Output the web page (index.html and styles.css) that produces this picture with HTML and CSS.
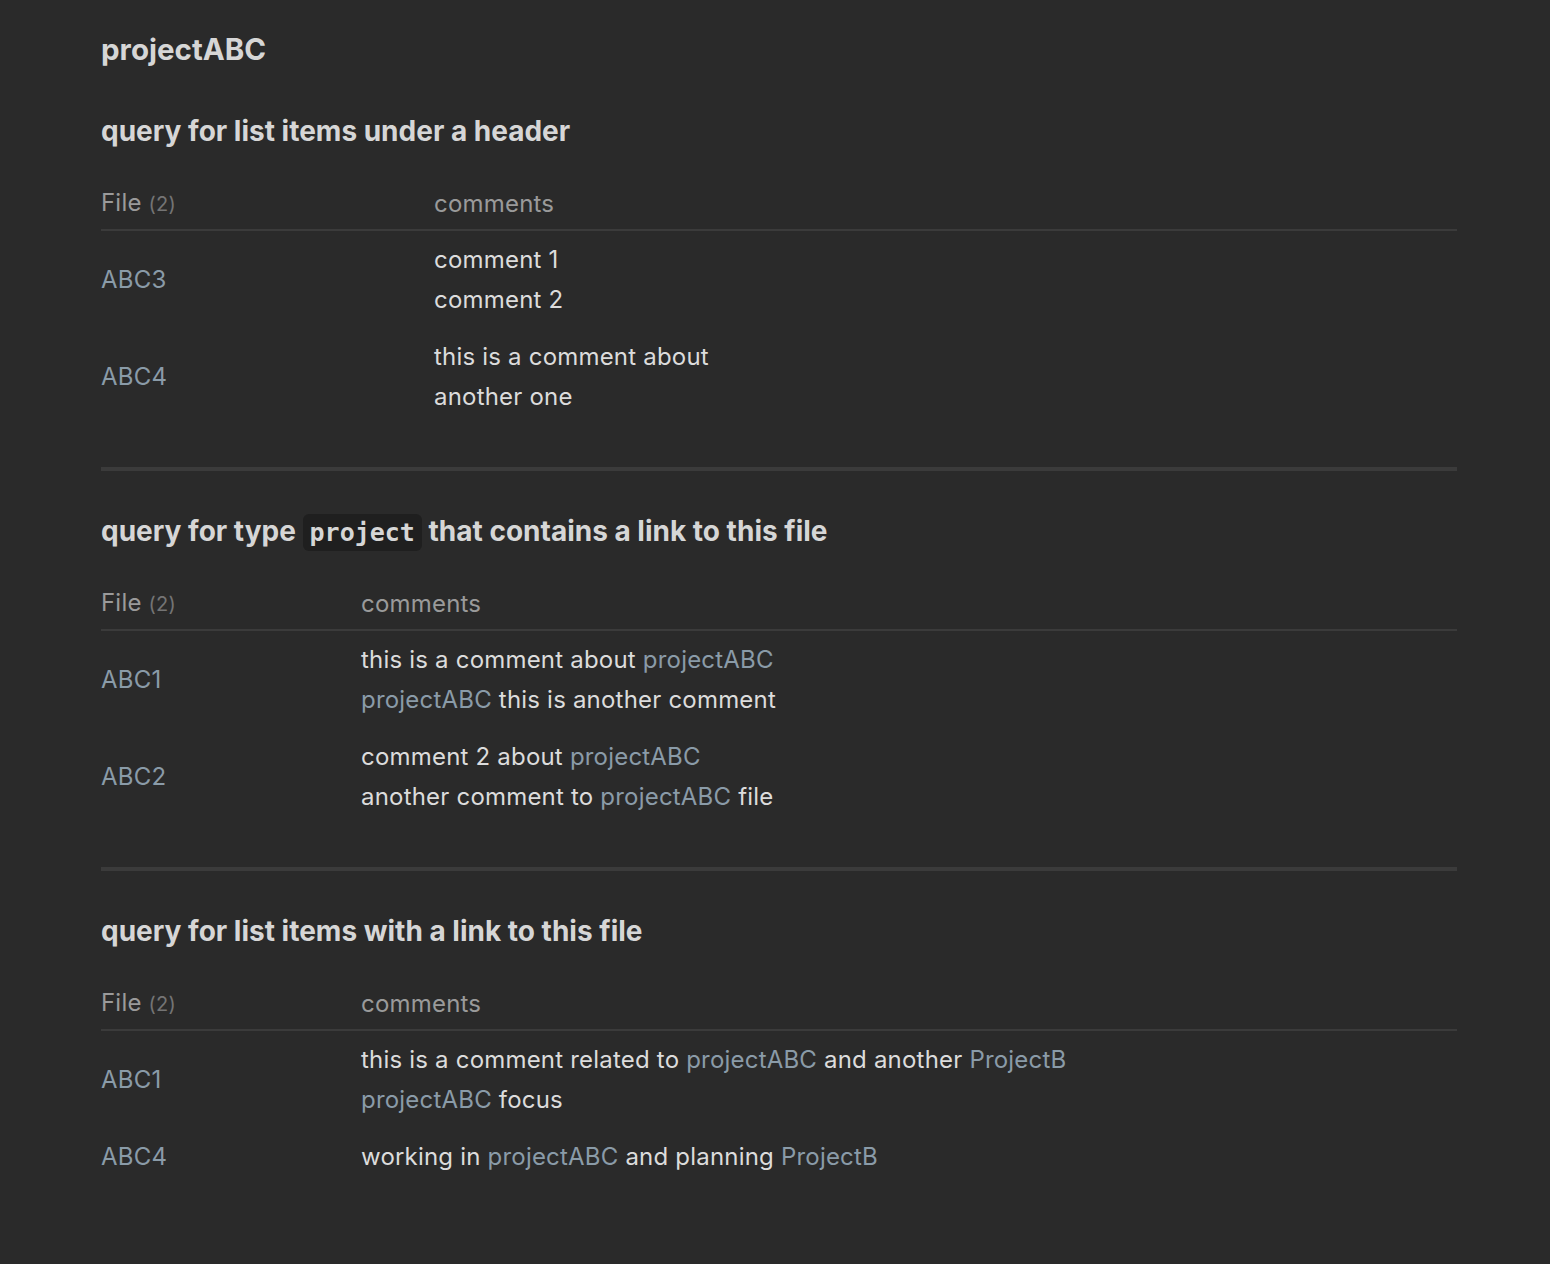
FILE: index.html
```html
<!DOCTYPE html>
<html lang="en">
<head>
<meta charset="utf-8">
<title>projectABC</title>
<link rel="stylesheet" href="styles.css">
</head>
<body>
<main class="page">
  <h1 class="title">projectABC</h1>

  <section class="query">
    <h2 class="query-title">query for list items under a header</h2>
    <table class="dv">
      <colgroup><col class="col-file col-file-wide"><col></colgroup>
      <thead>
        <tr><th>File <span class="count">(2)</span></th><th>comments</th></tr>
      </thead>
      <tbody>
        <tr>
          <td><a class="link">ABC3</a></td>
          <td><div class="line">comment 1</div><div class="line">comment 2</div></td>
        </tr>
        <tr>
          <td><a class="link">ABC4</a></td>
          <td><div class="line">this is a comment about</div><div class="line">another one</div></td>
        </tr>
      </tbody>
    </table>
  </section>

  <hr class="rule">

  <section class="query">
    <h2 class="query-title">query for type <code class="code">project</code> that contains a link to this file</h2>
    <table class="dv">
      <colgroup><col class="col-file"><col></colgroup>
      <thead>
        <tr><th>File <span class="count">(2)</span></th><th>comments</th></tr>
      </thead>
      <tbody>
        <tr>
          <td><a class="link">ABC1</a></td>
          <td><div class="line">this is a comment about <a class="link">projectABC</a></div><div class="line"><a class="link">projectABC</a> this is another comment</div></td>
        </tr>
        <tr>
          <td><a class="link">ABC2</a></td>
          <td><div class="line">comment 2 about <a class="link">projectABC</a></div><div class="line">another comment to <a class="link">projectABC</a> file</div></td>
        </tr>
      </tbody>
    </table>
  </section>

  <hr class="rule">

  <section class="query">
    <h2 class="query-title">query for list items with a link to this file</h2>
    <table class="dv">
      <colgroup><col class="col-file"><col></colgroup>
      <thead>
        <tr><th>File <span class="count">(2)</span></th><th>comments</th></tr>
      </thead>
      <tbody>
        <tr>
          <td><a class="link">ABC1</a></td>
          <td><div class="line">this is a comment related to <a class="link">projectABC</a> and another <a class="link">ProjectB</a></div><div class="line"><a class="link">projectABC</a> focus</div></td>
        </tr>
        <tr>
          <td><a class="link">ABC4</a></td>
          <td><div class="line">working in <a class="link">projectABC</a> and planning <a class="link">ProjectB</a></div></td>
        </tr>
      </tbody>
    </table>
  </section>
</main>
</body>
</html>
```

FILE: styles.css
```css
html, body {
  margin: 0;
  padding: 0;
  background: #2a2a2a;
}

body {
  font-family: Inter, "Noto Sans", "Liberation Sans", sans-serif;
  font-size: 24px;
  color: #dcdcdc;
  letter-spacing: 0.2px;
}

.page {
  width: 1356px;
  padding: 29px 0 60px 101px;
}

.title {
  margin: 0 0 42px;
  font-size: 29.5px;
  line-height: 40px;
  font-weight: 700;
  color: #d6d6d6;
  letter-spacing: 0;
}

.query-title {
  margin: 0 0 32px;
  font-size: 28px;
  line-height: 40px;
  font-weight: 700;
  color: #d6d6d6;
  letter-spacing: 0;
}

.rule + .query .query-title {
  margin-top: 40px;
}

.code {
  font-family: "DejaVu Sans Mono", "Liberation Mono", monospace;
  font-size: 25px;
  line-height: 1;
  font-weight: 700;
  background: #1f1f1f;
  border-radius: 6px;
  padding: 4px 7px;
  color: #d6d6d6;
  letter-spacing: 0;
}

.dv {
  width: 100%;
  table-layout: fixed;
  border-collapse: collapse;
}

.col-file { width: 260px; }
.col-file-wide { width: 333px; }

.dv th {
  text-align: left;
  font-weight: 400;
  color: #9a9a9a;
  line-height: 40px;
  padding: 0 0 5px;
  border-bottom: 2px solid #3b3b3b;
}

.count {
  font-size: 20px;
  color: #747474;
}

.dv td {
  padding: 9px 0 8px;
  vertical-align: middle;
  line-height: 40px;
}

.line {
  line-height: 40px;
}

.link {
  color: #8a9ba8;
  text-decoration: none;
}

.rule {
  margin: 42px 0 0;
  border: 0;
  height: 4px;
  background: #3b3b3b;
}
```
